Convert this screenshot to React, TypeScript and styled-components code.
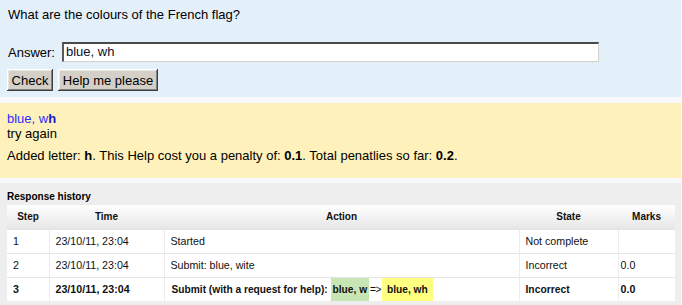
import React from "react";
import styled, { createGlobalStyle } from "styled-components";

const Global = createGlobalStyle`
  html, body { margin: 0; padding: 0; background: #f8f9fa; }
  body { font-family: "Liberation Sans", Arial, sans-serif; color: #000; }
  * { box-sizing: border-box; }
`;

const Page = styled.div`
  width: 681px;
  display: flex;
  flex-direction: column;
`;

const QuestionPanel = styled.div`
  background: #e3eff9;
  padding: 7px 8px 6px 7px;
  font-size: 13px;
  line-height: 15px;
`;

const QuestionText = styled.div`
  padding-left: 1px;
`;

const AnswerRow = styled.div`
  display: flex;
  align-items: center;
  margin-top: 20px;
  padding-left: 1px;
`;

const Label = styled.label`
  width: 54px;
`;

const AnswerInput = styled.div`
  width: 537px;
  height: 20px;
  background: #fff;
  border-style: solid;
  border-width: 2px 1px 1px 2px;
  border-color: #4a4a4a #d4d0c8 #d4d0c8 #5a5a5a;
  padding: 0 2px;
  font-size: 13px;
  line-height: 16px;
  color: #0d0d2b;
`;

const ButtonRow = styled.div`
  display: flex;
  gap: 5px;
  margin-top: 7px;
`;

const Button = styled.button<{ $w: number }>`
  width: ${(p) => p.$w}px;
  height: 22px;
  padding: 0;
  border: none;
  background: #d4d0c8;
  font-family: "Liberation Sans", Arial, sans-serif;
  font-size: 13px;
  color: #000;
  box-shadow: inset -1px -1px #404040, inset 1px 1px #ffffff,
    inset -2px -2px #808080, inset 2px 2px #e8e6e0;
`;

const FeedbackPanel = styled.div`
  margin-top: 6px;
  background: #fff1bb;
  padding: 8px 7px 15px 7px;
  font-size: 13px;
  line-height: 15px;
`;

const Echo = styled.div`
  color: #2c2cff;
  b { color: #1515c8; }
`;

const Penalty = styled.div`
  margin-top: 7px;
`;

const HistoryPanel = styled.div`
  margin-top: 5px;
  background: #eeeeee;
  padding: 7px 6px 6px 7px;
  height: 130px;
`;

const Legend = styled.div`
  font-size: 10px;
  font-weight: bold;
  line-height: 13px;
  margin-bottom: 2px;
`;

const Table = styled.table`
  width: 668px;
  border-collapse: collapse;
  table-layout: fixed;
  background: #fff;
  font-size: 10.67px;
  color: #111;
`;

const Th = styled.th<{ $w: number }>`
  width: ${(p) => p.$w}px;
  height: 24px;
  padding: 0;
  font-size: 10px;
  font-weight: bold;
  text-align: center;
  background: linear-gradient(#ffffff, #e6e6e6);
`;

const Tr = styled.tr<{ $bold?: boolean }>`
  font-weight: ${(p) => (p.$bold ? "bold" : "normal")};
`;

const Td = styled.td<{ $pl?: number; $fs?: number }>`
  height: 24px;
  padding: 0 0 0 ${(p) => p.$pl ?? 6}px;
  font-size: ${(p) => (p.$fs ? `${p.$fs}px` : "inherit")};
  border-top: 1px solid #e4e4e4;
  border-left: 1px solid #ececec;
  white-space: nowrap;
  &:first-child { border-left: none; }
`;

const Hl = styled.span<{ $c: string; $px: number }>`
  display: inline-block;
  height: 23px;
  line-height: 23px;
  padding: 0 ${(p) => p.$px}px;
  background: ${(p) => p.$c};
`;

const Arrow = styled.span`
  font-weight: normal;
  letter-spacing: -0.5px;
  margin: 0 1px 0 1px;
`;

export default function App() {
  return (
    <>
      <Global />
      <Page>
        <QuestionPanel>
          <QuestionText>What are the colours of the French flag?</QuestionText>
          <AnswerRow>
            <Label>Answer:</Label>
            <AnswerInput>blue, wh</AnswerInput>
          </AnswerRow>
          <ButtonRow>
            <Button $w={46}>Check</Button>
            <Button $w={100}>Help me please</Button>
          </ButtonRow>
        </QuestionPanel>
        <FeedbackPanel>
          <Echo>
            blue, w<b>h</b>
          </Echo>
          <div>try again</div>
          <Penalty>
            Added letter: <b>h</b>. This Help cost you a penalty of: <b>0.1</b>. Total
            penatlies so far: <b>0.2</b>.
          </Penalty>
        </FeedbackPanel>
        <HistoryPanel>
          <Legend>Response history</Legend>
          <Table>
            <thead>
              <tr>
                <Th $w={42}>Step</Th>
                <Th $w={115}>Time</Th>
                <Th $w={355}>Action</Th>
                <Th $w={99}>State</Th>
                <Th $w={57}>Marks</Th>
              </tr>
            </thead>
            <tbody>
              <Tr>
                <Td>1</Td>
                <Td>23/10/11, 23:04</Td>
                <Td>Started</Td>
                <Td>Not complete</Td>
                <Td $pl={2}></Td>
              </Tr>
              <Tr>
                <Td>2</Td>
                <Td>23/10/11, 23:04</Td>
                <Td>Submit: blue, wite</Td>
                <Td>Incorrect</Td>
                <Td $pl={2}>0.0</Td>
              </Tr>
              <Tr $bold>
                <Td>3</Td>
                <Td>23/10/11, 23:04</Td>
                <Td $pl={7} $fs={10.2}>
                  Submit (with a request for help):{" "}
                  <Hl $c="#c8e6b4" $px={2}>blue, w</Hl>
                  <Arrow>=&gt;</Arrow>
                  <Hl $c="#ffff80" $px={5}>blue, wh</Hl>
                </Td>
                <Td $fs={10.3}>Incorrect</Td>
                <Td $pl={2}>0.0</Td>
              </Tr>
            </tbody>
          </Table>
        </HistoryPanel>
      </Page>
    </>
  );
}
